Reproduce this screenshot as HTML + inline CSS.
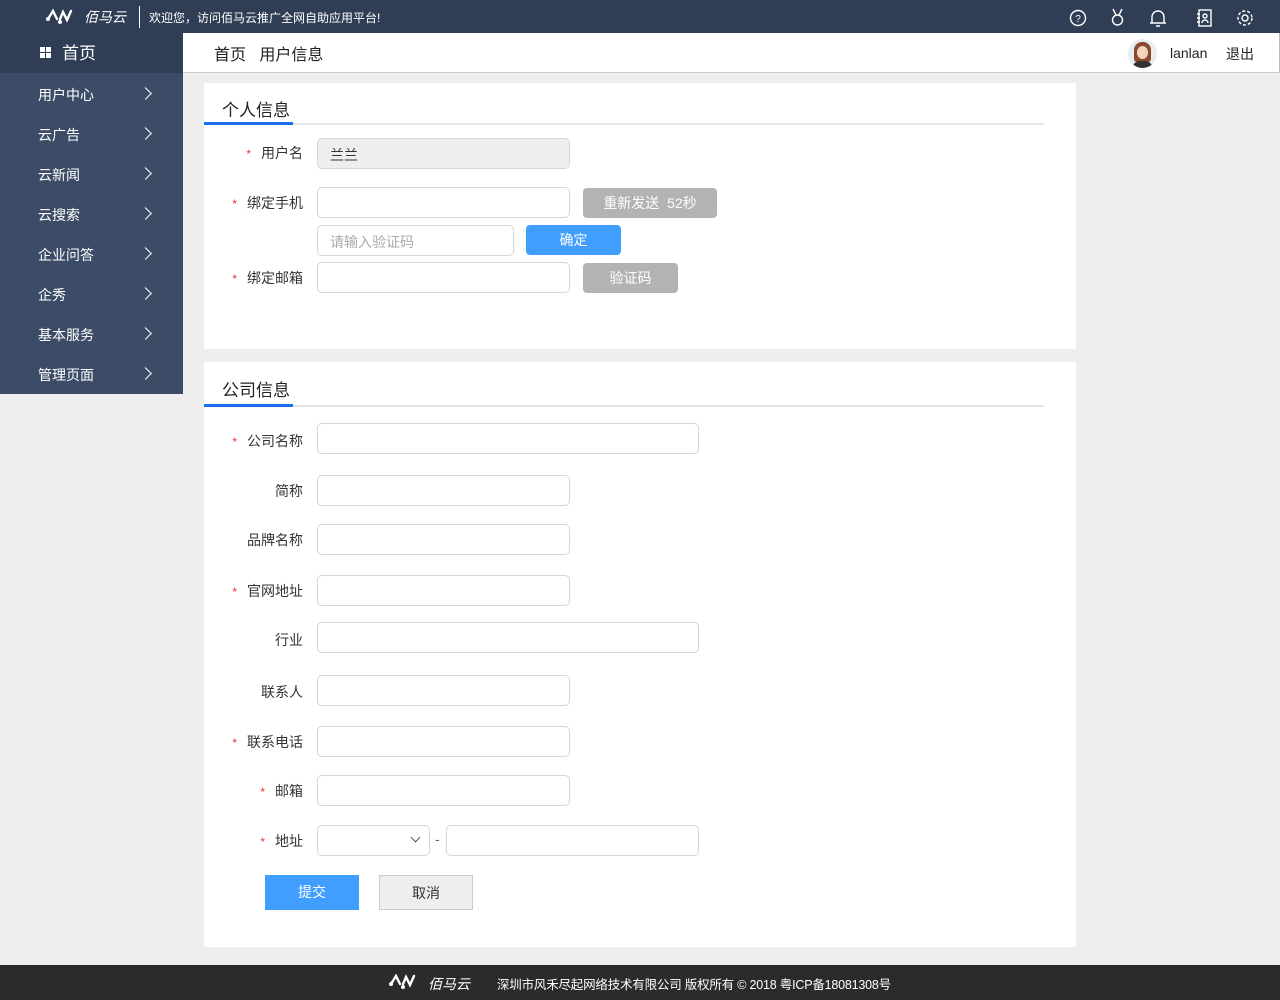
<!DOCTYPE html><html><head><meta charset="utf-8"><style>
*{box-sizing:border-box;margin:0;padding:0}
body{width:1280px;height:1000px;background:#eee;font-family:"Liberation Sans","Noto Sans CJK SC",sans-serif;font-size:14px;color:#333;position:relative;overflow:hidden}
.a{position:absolute}
.top{left:0;top:0;width:1280px;height:33px;background:#2f3d55;color:#fff}
.side{left:0;top:33px;width:183px;height:361px;background:#3c4c67}
.side .home{height:40px;background:#2f3d55;color:#fff;font-size:17px;padding-left:62px;line-height:42px;position:relative}
.side .it{height:40px;line-height:44px;color:#fff;font-size:14px;padding-left:38px;position:relative}
.side .it:after{content:"";position:absolute;left:141px;top:16px;width:8px;height:8px;border-right:1.5px solid #fff;border-top:1.5px solid #fff;transform:rotate(45deg)}
.hdr{left:183px;top:33px;width:1097px;height:40px;background:#fff;border-bottom:1px solid #ccc;border-right:1px solid #bbb}
.panel{background:#fff;left:204px;width:872px}
.ttl{position:absolute;left:18px;font-size:17px;color:#222}
.line{position:absolute;left:0;width:840px;height:2px;background:#e6e6e6}
.blue{position:absolute;left:0;width:89px;height:3px;background:#1a6ff0}
.lb{position:absolute;width:120px;text-align:right;left:183px;font-size:14px;color:#333}
.lb i{color:#e33;font-style:normal;font-size:12px;margin-right:10px}
.in{position:absolute;height:31px;border:1px solid #d6d6d6;border-radius:5px;background:#fff}
.btn{position:absolute;height:30px;border-radius:4px;color:#fff;text-align:center;line-height:30px;font-size:14px}
</style></head><body>
<div class="a top">
 <svg class="a" style="left:46px;top:7px" width="32" height="20" viewBox="0 0 32 20"><path d="M2 12 L7 4 L11 12 M14 12 L17 5 L21 13 L25 4" stroke="#fff" stroke-width="2.4" fill="none" stroke-linecap="round"/><circle cx="2" cy="12" r="2" fill="#fff"/><circle cx="14" cy="15" r="2" fill="#fff"/></svg>
 <div class="a" style="left:84px;top:7px;font-size:14px;font-style:italic">佰马云</div>
 <div class="a" style="left:139px;top:6px;width:1px;height:22px;background:#fff"></div>
 <div class="a" style="left:149px;top:9px;font-size:12px">欢迎您，访问佰马云推广全网自助应用平台!</div>
 <svg class="a" style="left:1068px;top:8px" width="190" height="20" viewBox="0 0 190 20" fill="none" stroke="#fff" stroke-width="1.4">
  <circle cx="10" cy="10" r="7.5"/><text x="10" y="14" fill="#fff" stroke="none" font-size="10" text-anchor="middle" font-family="Liberation Sans">?</text>
  <path d="M45 1 L48 7 M54 1 L51 7"/><circle cx="49.5" cy="12" r="5"/>
  <path d="M84 15 V9 a6 6 0 0 1 12 0 V15 H82 H98 M88 18 h4"/>
  <rect x="131" y="2" width="12" height="16"/><path d="M129 6h3M129 10h3M129 14h3"/><circle cx="137" cy="8" r="2"/><path d="M134 15 a3 3 0 0 1 6 0"/>
  <circle cx="177" cy="10" r="3"/><circle cx="177" cy="10" r="7" stroke-dasharray="3 2"/>
 </svg>
</div>
<div class="a side">
 <div class="home"><span style="position:absolute;left:40px;top:14px;width:11px;height:11px;background:linear-gradient(#fff,#fff) 0 0/5px 5px no-repeat,linear-gradient(#fff,#fff) 6px 0/5px 5px no-repeat,linear-gradient(#fff,#fff) 0 6px/5px 5px no-repeat,linear-gradient(#fff,#fff) 6px 6px/5px 5px no-repeat"></span>首页</div>
 <div class="it">用户中心</div><div class="it">云广告</div><div class="it">云新闻</div><div class="it">云搜索</div><div class="it">企业问答</div><div class="it">企秀</div><div class="it">基本服务</div><div class="it">管理页面</div>
</div>
<div class="a hdr">
 <div class="a" style="left:31px;top:8px;font-size:16px;color:#222">首页&nbsp;&nbsp;&nbsp;用户信息</div>
 <div class="a" style="left:945px;top:6px;width:29px;height:29px;border-radius:50%;background:#e8edf2;overflow:hidden">
  <div class="a" style="left:6px;top:3px;width:17px;height:20px;border-radius:8px 8px 3px 3px;background:#8b4a2b"></div>
  <div class="a" style="left:9px;top:7px;width:11px;height:13px;border-radius:50%;background:#f6d3bd"></div>
  <div class="a" style="left:4px;top:22px;width:21px;height:10px;border-radius:8px 8px 0 0;background:#333"></div>
 </div>
 <div class="a" style="left:987px;top:12px;font-size:14px;color:#222">lanlan</div>
 <div class="a" style="left:1043px;top:11px;font-size:14px;color:#222">退出</div>
</div>

<div class="a panel" style="top:83px;height:266px">
 <div class="ttl" style="top:13px">个人信息</div><div class="line" style="top:40px"></div><div class="blue" style="top:39px"></div>
</div>
<div class="lb" style="top:143px"><i>*</i>用户名</div>
<div class="in" style="left:317px;top:138px;width:253px;background:#eee;padding:6px 12px">兰兰</div>
<div class="lb" style="top:193px"><i>*</i>绑定手机</div>
<div class="in" style="left:317px;top:187px;width:253px"></div>
<div class="btn" style="left:583px;top:188px;width:134px;background:#b3b3b3">重新发送&nbsp;&nbsp;52秒</div>
<div class="in" style="left:317px;top:225px;width:197px;color:#aaa;padding:6px 12px">请输入验证码</div>
<div class="btn" style="left:526px;top:225px;width:95px;background:#409eff">确定</div>
<div class="lb" style="top:268px"><i>*</i>绑定邮箱</div>
<div class="in" style="left:317px;top:262px;width:253px"></div>
<div class="btn" style="left:583px;top:263px;width:95px;background:#b3b3b3">验证码</div>

<div class="a panel" style="top:362px;height:585px">
 <div class="ttl" style="top:14px">公司信息</div><div class="line" style="top:43px"></div><div class="blue" style="top:42px"></div>
 <div class="btn" style="left:61px;top:513px;width:94px;height:35px;line-height:35px;border-radius:0;background:#409eff">提交</div>
 <div class="btn" style="left:175px;top:513px;width:94px;height:35px;line-height:35px;border-radius:0;background:#eee;border:1px solid #ccc;color:#333">取消</div>
</div>
<div class="lb" style="top:431px"><i>*</i>公司名称</div><div class="in" style="left:317px;top:423px;width:382px"></div>
<div class="lb" style="top:481px">简称</div><div class="in" style="left:317px;top:475px;width:253px"></div>
<div class="lb" style="top:530px">品牌名称</div><div class="in" style="left:317px;top:524px;width:253px"></div>
<div class="lb" style="top:581px"><i>*</i>官网地址</div><div class="in" style="left:317px;top:575px;width:253px"></div>
<div class="lb" style="top:630px">行业</div><div class="in" style="left:317px;top:622px;width:382px"></div>
<div class="lb" style="top:682px">联系人</div><div class="in" style="left:317px;top:675px;width:253px"></div>
<div class="lb" style="top:732px"><i>*</i>联系电话</div><div class="in" style="left:317px;top:726px;width:253px"></div>
<div class="lb" style="top:781px"><i>*</i>邮箱</div><div class="in" style="left:317px;top:775px;width:253px"></div>
<div class="lb" style="top:831px"><i>*</i>地址</div>
<div class="in" style="left:317px;top:825px;width:113px"><div class="a" style="left:94px;top:8px;width:7px;height:7px;border-right:1.2px solid #555;border-bottom:1.2px solid #555;transform:rotate(45deg)"></div></div>
<div class="a" style="left:435px;top:831px;color:#666">-</div>
<div class="in" style="left:446px;top:825px;width:253px"></div>

<div class="a" style="left:0;top:965px;width:1280px;height:35px;background:#2b2b2b;color:#fff">
 <svg class="a" style="left:389px;top:7px" width="32" height="20" viewBox="0 0 32 20"><path d="M2 12 L7 4 L11 12 M14 12 L17 5 L21 13 L25 4" stroke="#fff" stroke-width="2.4" fill="none" stroke-linecap="round"/><circle cx="2" cy="12" r="2" fill="#fff"/><circle cx="14" cy="15" r="2" fill="#fff"/></svg>
 <div class="a" style="left:428px;top:9px;font-size:14px;font-style:italic">佰马云</div>
 <div class="a" style="left:497px;top:9px;font-size:12.5px;letter-spacing:-0.2px">深圳市风禾尽起网络技术有限公司 版权所有 © 2018 粤ICP备18081308号</div>
</div>
</body></html>
